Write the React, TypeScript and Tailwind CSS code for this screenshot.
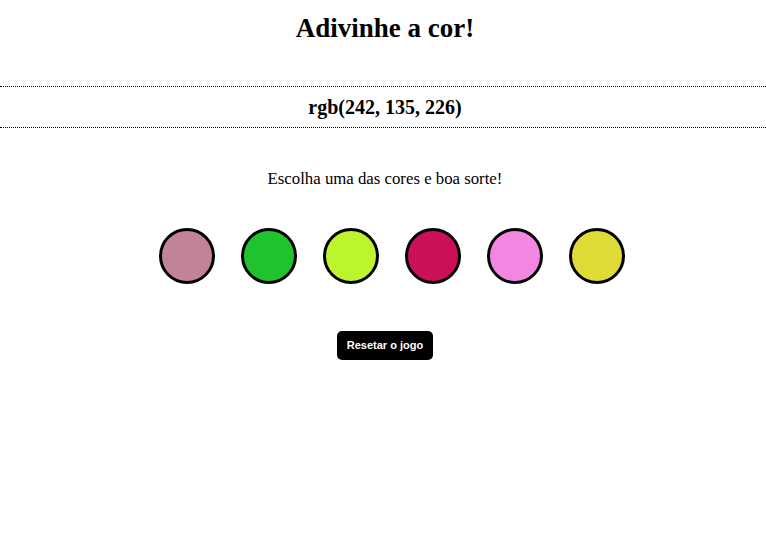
const colors = ['#c18497', '#1ec32d', '#bdf52d', '#cc1058', '#f287e2', '#dedb37'];

export default function App() {
  return (
    <div className="min-h-[534px] bg-white text-black font-['Liberation_Serif','Times_New_Roman',serif]">
      <h1 className="mt-[13px] pl-[4px] text-center text-[27px] font-bold leading-[31px]">Adivinhe a cor!</h1>

      <div className="mt-[42px] border-y border-dotted border-black py-2 pl-[4px]">
        <h2 className="text-center text-[20px] font-bold leading-[24px]">rgb(242, 135, 226)</h2>
      </div>

      <p className="mt-[41px] pl-[4px] text-center text-[16.8px] leading-[20px]">Escolha uma das cores e boa sorte!</p>

      <div className="mt-[39px] flex justify-center gap-[26px] pl-[18px]">
        {colors.map((c) => (
          <button
            key={c}
            className="h-[56px] w-[56px] rounded-full border-[3px] border-black"
            style={{ backgroundColor: c }}
          />
        ))}
      </div>

      <div className="mt-[47px] flex justify-center pl-[4px]">
        <button className="rounded-[5px] bg-black px-[10px] py-2 font-['Liberation_Sans',Arial,sans-serif] text-[11px] font-bold leading-[13px] text-white">
          Resetar o jogo
        </button>
      </div>
    </div>
  );
}
